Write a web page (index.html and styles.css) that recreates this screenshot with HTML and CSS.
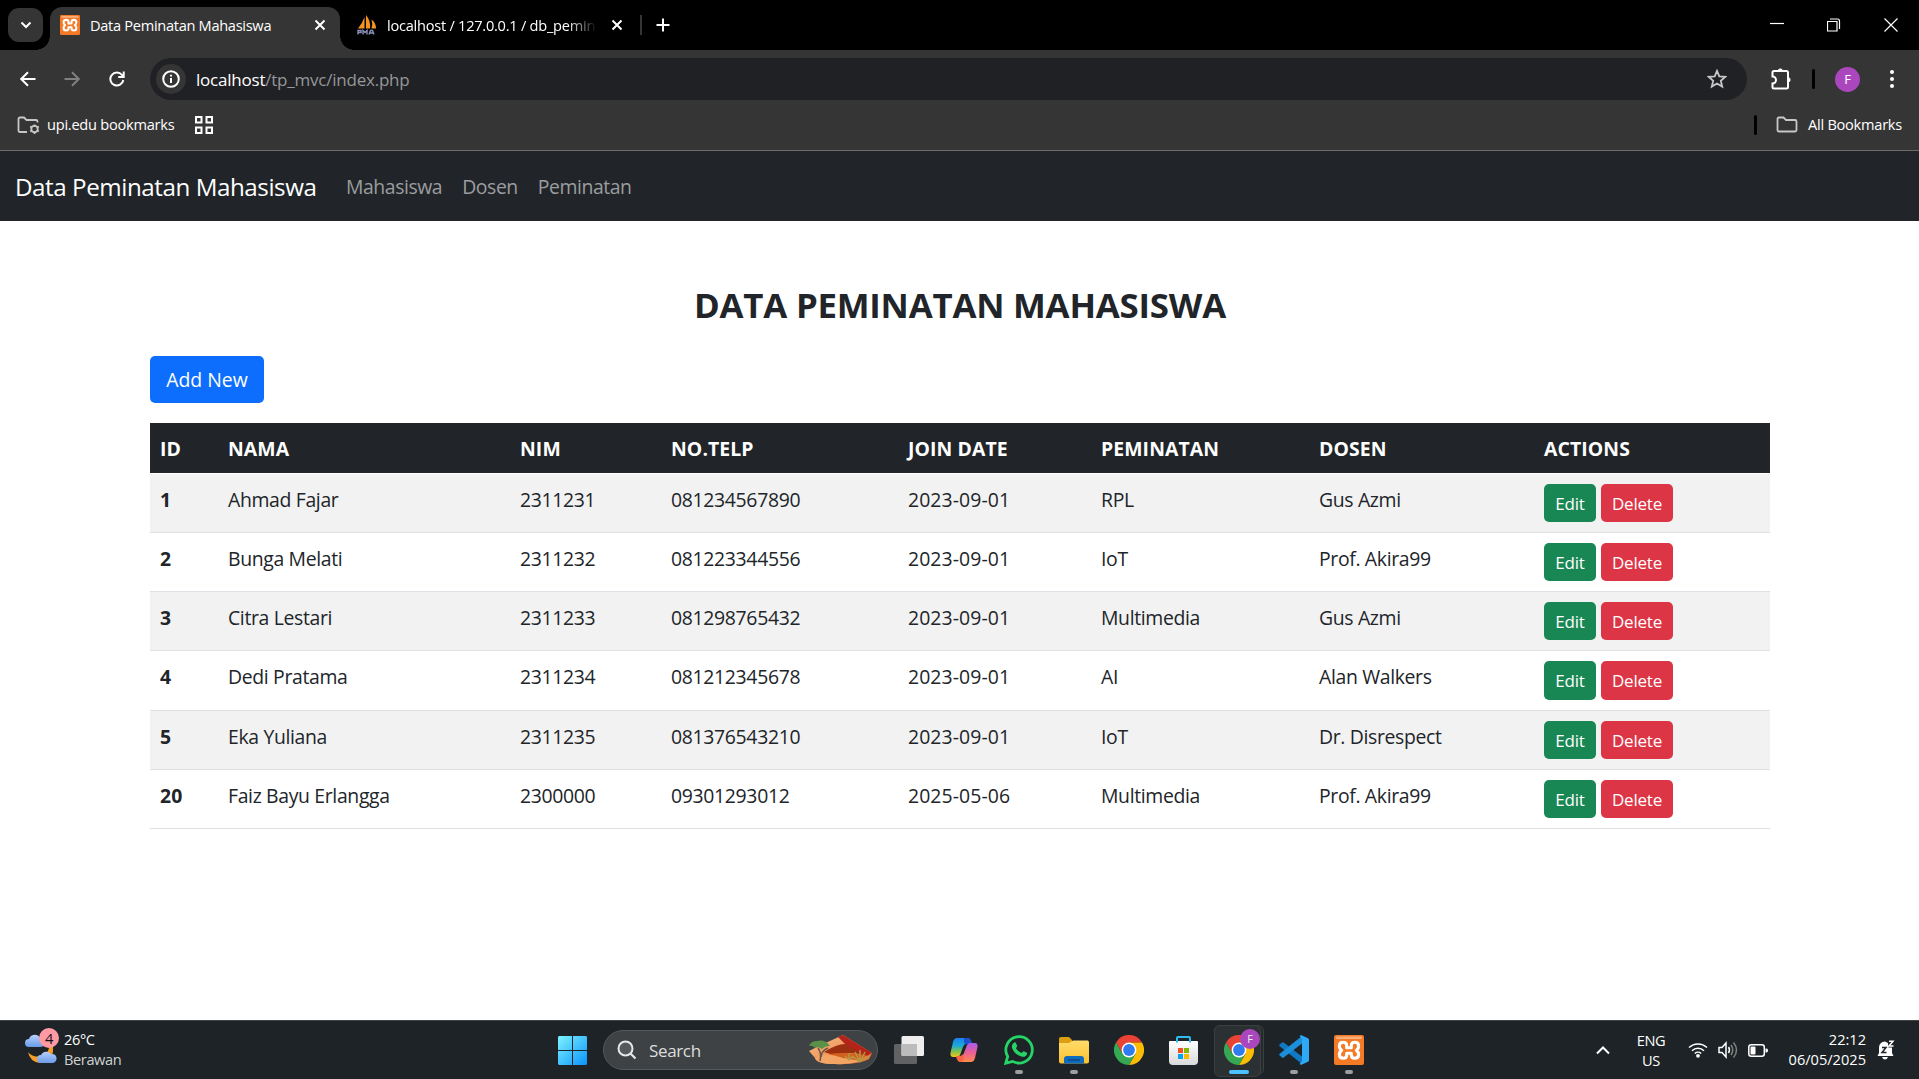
FILE: index.html
```html
<!DOCTYPE html>
<html lang="id">
<head>
<meta charset="utf-8">
<title>Data Peminatan Mahasiswa</title>
<link rel="stylesheet" href="styles.css">
</head>
<body>
<svg class="defs" width="0" height="0" aria-hidden="true">
  <defs>
    <linearGradient id="win" x1="0" y1="0" x2="1" y2="1"><stop offset="0" stop-color="#7df3ff"/><stop offset="1" stop-color="#0a93fb"/></linearGradient>
    <linearGradient id="fold" x1="0" y1="0" x2="0" y2="1"><stop offset="0" stop-color="#ffdc6b"/><stop offset="1" stop-color="#fcc02f"/></linearGradient>
    <linearGradient id="cop1" x1="0" y1="0" x2="0" y2="1"><stop offset="0" stop-color="#1d7ff0"/><stop offset=".4" stop-color="#19a9d8"/><stop offset=".7" stop-color="#7fc250"/><stop offset="1" stop-color="#f3c61c"/></linearGradient>
    <linearGradient id="cop2" x1="0" y1="0" x2="0" y2="1"><stop offset="0" stop-color="#a65cf0"/><stop offset=".5" stop-color="#ea5f96"/><stop offset="1" stop-color="#ff8a4c"/></linearGradient>
    <linearGradient id="dune" x1="0" y1="0" x2="1" y2="1"><stop offset="0" stop-color="#fbc08a"/><stop offset="1" stop-color="#e2702f"/></linearGradient>
    <linearGradient id="store" x1="0" y1="0" x2="0" y2="1"><stop offset="0" stop-color="#fff"/><stop offset="1" stop-color="#d9d9d9"/></linearGradient>
    <linearGradient id="cloud" x1="0" y1="0" x2="0" y2="1"><stop offset="0" stop-color="#b4d0fb"/><stop offset="1" stop-color="#6b9be9"/></linearGradient>
    <symbol id="xampp" viewBox="0 0 30 30">
      <rect width="30" height="30" rx="2" fill="#f47a26"/><rect x="2" y="1.5" width="26" height="2.5" rx="1.2" fill="#f9ae7c"/>
      <path d="M15 12.800H17.300V10.500Q17.300 7.300 20.800 7.300 24.600 7.300 24.600 11 24.600 14 22.300 15.300 24.600 16.600 24.600 19.600 24.600 23.300 20.800 23.300 17.300 23.300 17.300 20V18.300H12.700V20Q12.700 23.300 9.200 23.300 5.400 23.300 5.400 19.600 5.400 16.600 7.700 15.300 5.400 14 5.400 11 5.400 7.300 9.200 7.300 12.700 7.300 12.700 10.500V12.800Z" fill="none" stroke="#fff" stroke-width="3.100" stroke-linejoin="round"/>
    </symbol>
    <symbol id="chrome" viewBox="0 0 30 30">
      <path d="M2 7.500A15 15 0 0 1 28 7.500H15L8.500 18.800Z" fill="#ea4335"/>
      <path d="M28 7.500A15 15 0 0 1 15 30L21.500 18.700 15 7.500Z" fill="#fbbc05"/>
      <path d="M2 7.500 8.500 18.800Q15 25 21.500 18.700L15 30A15 15 0 0 1 2 7.500Z" fill="#34a853"/>
      <circle cx="15" cy="15" r="7.400" fill="#fff"/><circle cx="15" cy="15" r="5.900" fill="#2f7cf0"/>
    </symbol>
  </defs>
</svg>

<header class="chrome">
  <div class="tabstrip">
    <button class="tab-search"><svg width="12" height="8" viewBox="0 0 12 8"><path d="m1.500 1.500 4.500 4.500 4.500-4.500" class="ln w2"/></svg></button>
    <div class="tab active">
      <svg class="fav" viewBox="0 0 30 30"><use href="#xampp"/></svg>
      <span class="tab-title">Data Peminatan Mahasiswa</span>
      <svg class="x" width="12" height="12" viewBox="0 0 12 12"><path d="m1.500 1.500 9 9m0-9-9 9" class="ln w2"/></svg>
    </div>
    <div class="tab idle">
      <svg class="fav" viewBox="0 0 20 20"><path d="M7.500 2v11.500H1Q5.500 8 7.500 2ZM9 0q5 6 4 13.500H9ZM14.500 4.500q4.500 3 4.500 9h-4.500Q16 9 14.500 4.500Z" fill="#f5951f"/><path d="M1 19.500v-4h3v2H1m5 2v-4l2 2 2-2v4m2 0 1.500-4h2l1.500 4m-4-1.500h3" fill="none" stroke="#8a8fb8" stroke-width="1.400"/></svg>
      <span class="tab-title fade">localhost / 127.0.0.1 / db_pemin</span>
      <svg class="x" width="12" height="12" viewBox="0 0 12 12"><path d="m1.500 1.500 9 9m0-9-9 9" class="ln w2"/></svg>
    </div>
    <i class="tab-sep"></i>
    <svg class="plus" width="14" height="14" viewBox="0 0 14 14"><path d="M7 .5v13M.5 7h13" class="ln w2"/></svg>
    <div class="win">
      <svg width="14" height="14" viewBox="0 0 14 14"><path d="M0 5.500h14" class="ln w1"/></svg>
      <svg width="14" height="14" viewBox="0 0 14 14"><path d="M.5 3.500h9.500v9.500H.5zM3 1h7.500q2 0 2 2v8" class="ln w1"/></svg>
      <svg width="14" height="14" viewBox="0 0 14 14"><path d="m.5.5 13 13m0-13-13 13" class="ln w1"/></svg>
    </div>
  </div>
  <div class="toolbar">
    <svg class="back" width="16" height="16" viewBox="0 0 16 16"><path d="M15.500 8H1.500M8 1.200 1.200 8 8 14.800" class="ln w2"/></svg>
    <svg class="fwd" width="16" height="16" viewBox="0 0 16 16"><path d="M.5 8h14M8 1.200 14.800 8 8 14.800" class="ln w2 dim"/></svg>
    <svg class="reload" width="16" height="16" viewBox="0 0 16 16"><path d="M14.300 9A6.500 6.500 0 1 1 13 4L14.500 5.500M14.700.5V6H9.200" class="ln w2"/></svg>
    <div class="omnibox">
      <span class="info"><svg width="18" height="18" viewBox="0 0 18 18"><circle cx="9" cy="9" r="7.800" class="ln w2"/><path d="M9 8v5M9 4.800v1.800" class="ln w2"/></svg></span>
      <span class="url">localhost<span class="path">/tp_mvc/index.php</span></span>
      <svg class="star" width="20" height="20" viewBox="0 0 20 20"><path d="m10 1.800 2.300 5.500 6 .5-4.500 3.900 1.400 5.900L10 14.500l-5.200 3.100 1.400-5.900L1.700 7.800l6-.5Z" class="ln soft"/></svg>
    </div>
    <svg class="puzzle" width="24" height="24" viewBox="0 0 24 24"><path d="M3.500 5.500q0-1.500 1.500-1.500H17.500q1.500 0 1.500 1.500V20q0 1.500-1.500 1.500H5q-1.500 0-1.500-1.500V16.500a3.500 3.500 0 0 0 0-7Z" class="ln w2"/><path d="M8.800 4a2.500 2.500 0 0 1 5 0ZM19 10.200a2.500 2.500 0 0 1 0 5Z" fill="#fff"/></svg>
    <i class="bar b1"></i>
    <span class="avatar">F</span>
    <svg class="dots" width="6" height="20" viewBox="0 0 6 20"><circle cx="3" cy="3" r="2" fill="#fff"/><circle cx="3" cy="10" r="2" fill="#fff"/><circle cx="3" cy="17" r="2" fill="#fff"/></svg>
  </div>
  <div class="bookmarks">
    <svg width="24" height="20" viewBox="0 0 24 20"><path d="M11 17H4q-1.500 0-1.500-1.500V4Q2.500 2.500 4 2.500h4L10.500 5h9.500q1.500 0 1.500 1.500V7.500" class="ln soft"/><circle cx="18.500" cy="14" r="3.200" class="ln soft"/><path d="M18.500 9.500v2m0 5.500v2m-4.300-7.500 1.700 1m5.200 3 1.700 1m0-5-1.700 1m-5.200 3-1.700 1" class="ln soft"/></svg>
    <span class="bm">upi.edu bookmarks</span>
    <svg class="grid" width="18" height="18" viewBox="0 0 18 18"><path d="M1 1h5.500v5.500H1zM11.500 1H17v5.500h-5.500zM1 11.500h5.500V17H1zM11.500 11.500H17V17h-5.500z" class="ln w2"/></svg>
    <i class="bar b2"></i>
    <svg width="22" height="17" viewBox="0 0 22 17"><path d="M1.500 3q0-1.500 1.500-1.500h4.500L10 4h9q1.500 0 1.500 1.500V14q0 1.500-1.500 1.500H3Q1.500 15.500 1.500 14Z" class="ln soft"/></svg>
    <span class="all">All Bookmarks</span>
  </div>
</header>

<nav class="navbar">
  <a class="brand">Data Peminatan Mahasiswa</a>
  <a class="link">Mahasiswa</a><a class="link">Dosen</a><a class="link">Peminatan</a>
</nav>

<main class="container">
  <h3 class="title">DATA PEMINATAN MAHASISWA</h3>
  <a class="btn add">Add New</a>
  <table class="table">
    <colgroup><col class="c1"><col class="c2"><col class="c3"><col class="c4"><col class="c5"><col class="c6"><col class="c7"><col class="c8"></colgroup>
    <thead><tr><th>ID</th><th>NAMA</th><th>NIM</th><th>NO.TELP</th><th>JOIN DATE</th><th>PEMINATAN</th><th>DOSEN</th><th>ACTIONS</th></tr></thead>
    <tbody>
      <tr><th>1</th><td>Ahmad Fajar</td><td class="num">2311231</td><td class="num">081234567890</td><td class="date">2023-09-01</td><td>RPL</td><td>Gus Azmi</td><td class="act"><a class="btn sm edit">Edit</a><a class="btn sm del">Delete</a></td></tr>
      <tr><th>2</th><td>Bunga Melati</td><td class="num">2311232</td><td class="num">081223344556</td><td class="date">2023-09-01</td><td>IoT</td><td>Prof. Akira99</td><td class="act"><a class="btn sm edit">Edit</a><a class="btn sm del">Delete</a></td></tr>
      <tr><th>3</th><td>Citra Lestari</td><td class="num">2311233</td><td class="num">081298765432</td><td class="date">2023-09-01</td><td>Multimedia</td><td>Gus Azmi</td><td class="act"><a class="btn sm edit">Edit</a><a class="btn sm del">Delete</a></td></tr>
      <tr class="tall"><th>4</th><td>Dedi Pratama</td><td class="num">2311234</td><td class="num">081212345678</td><td class="date">2023-09-01</td><td>AI</td><td>Alan Walkers</td><td class="act"><a class="btn sm edit">Edit</a><a class="btn sm del">Delete</a></td></tr>
      <tr><th>5</th><td>Eka Yuliana</td><td class="num">2311235</td><td class="num">081376543210</td><td class="date">2023-09-01</td><td>IoT</td><td>Dr. Disrespect</td><td class="act"><a class="btn sm edit">Edit</a><a class="btn sm del">Delete</a></td></tr>
      <tr><th>20</th><td>Faiz Bayu Erlangga</td><td class="num">2300000</td><td class="num">09301293012</td><td class="date">2025-05-06</td><td>Multimedia</td><td>Prof. Akira99</td><td class="act"><a class="btn sm edit">Edit</a><a class="btn sm del">Delete</a></td></tr>
    </tbody>
  </table>
</main>

<footer class="taskbar">
  <div class="weather">
    <div class="wicon">
      <svg width="36" height="36" viewBox="0 0 36 36"><path d="M23 8a12 12 0 0 1-19 15q2 10 12 11Q30 33 29 18 27 11 23 8Z" fill="#f59f26"/><path d="M5 18a4 4 0 0 1 0-8 6 6 0 0 1 11-1 4.500 4.500 0 0 1 1 9Z" fill="url(#cloud)"/><path d="M17 34a4 4 0 0 1 0-8 6 6 0 0 1 10-1 4.500 4.500 0 0 1 2 9Z" fill="url(#cloud)"/></svg>
      <span class="badge">4</span>
    </div>
    <div class="wtext"><span>26°C</span><span class="sub">Berawan</span></div>
  </div>
  <div class="apps">
    <svg class="start" width="29" height="29" viewBox="0 0 29 29"><path d="M1 0h13v14H0V1zM15 0h13l1 1v13H15zM0 15h14v14H1l-1-1zM15 15h14v13l-1 1H15z" fill="url(#win)"/></svg>
    <div class="search">
      <svg width="20" height="20" viewBox="0 0 20 20"><circle cx="8.500" cy="8.500" r="7" fill="#55595b" stroke="#e6e7e7" stroke-width="2"/><path d="m13.500 13.500 5 5" stroke="#e6e7e7" stroke-width="2.200"/></svg>
      <span class="stext">Search</span>
      <svg width="64" height="30" viewBox="0 0 64 30"><path d="M0 16 10 11 34 0 63 18 60 24Q50 30 26 29 8 29 6 23Z" fill="url(#dune)"/><path d="M29 2 34 0 63 18 58 21 40 13Z" fill="#b3231a"/><path d="M15 17Q28 9 36 9L57 21Q44 16 34 19 24 21 15 17Z" fill="#9c2f10"/><path d="M20 19Q38 16 57 21L50 25Q34 25 20 19Z" fill="#d2601f"/><path d="M6 23q12-6 28 0l17 3q-12 4-25 3Q8 29 6 23Z" fill="#f3a566"/><path d="M9 13q4 5 2 13M19 13q-7 3-7 9" stroke="#6d5648" stroke-width="1.600" fill="none"/><path d="M0 11q2-5 8-5 8-2 13 5-5 0-8 3-4-3-7-1-3-3-6-2Z" fill="#5b9146"/><path d="M51 27 43 21m8 6-5-10m5 10V15m0 12 5-10m-5 10 8-6M40 25l-4-4m4 4v-7m0 7 4-4" stroke="#b99642" stroke-width="1.500"/></svg>
    </div>
    <svg class="slot" width="30" height="30" viewBox="0 0 30 30"><rect x="0" y="9" width="23" height="20" rx="1.500" fill="#606263"/><rect x="7.500" y="1" width="22.500" height="20" rx="1.500" fill="#eee"/><path d="M7.500 9H23v12H9q-1.500 0-1.500-1.500Z" fill="#bcbcbc"/></svg>
    <svg class="slot" width="30" height="30" viewBox="0 0 30 30"><path d="M8 3h11q2 0 3 3l1 3h-6q-2 0-3 3l-3 8q-1 2-3 2H4q-3 0-2.500-4L4 7q1-4 4-4Z" fill="url(#cop1)"/><path d="M15 3h4q2 0 3 3l1 3h-5q-3 0-3-2Z" fill="#1c50cf"/><path d="M22 27H11q-2 0-3-3l-1-3h4q3 0 4-3l3-8q1-2 3-2h5q3 0 2.500 4L26 23q-1 4-4 4Z" fill="url(#cop2)"/><path d="M7 21h4q2 0 3-2l1 5q-1 3-4 3-2 0-3-3Z" fill="#f66442"/></svg>
    <div class="slot run"><svg width="30" height="30" viewBox="0 0 30 30"><path d="M1.800 28.200 3.700 21.500A13.200 13.200 0 1 1 8.700 26.400Z" fill="#1d2326" stroke="#25d366" stroke-width="2.800"/><path d="M9.500 8q1-1 2.200-.5l1.500 3.500q0 .8-1.300 2 2 3.800 5.700 5 1.500-2 2.200-1.800l3.200 1.500q.5 2-1.200 3.200-2 1.300-4.500.6-7-2-9.300-8.700-.6-3 1.500-4.800Z" fill="#25d366"/></svg></div>
    <div class="slot run"><svg width="30" height="30" viewBox="0 0 30 30"><path d="M0 4q0-2 2-2h8l3 3v5H0Z" fill="#dc9f12"/><path d="M0 8h10l4-2.500h15L30 7v19.500q0 2-2 2H2q-2 0-2-2Z" fill="url(#fold)"/><path d="M5 28.500V24q0-3 3-3h14q3 0 3 3v4.500Z" fill="#0f6cbd"/><path d="M9 25h12" stroke="#084a86" stroke-width="1.500"/></svg></div>
    <svg class="slot" width="30" height="30"><use href="#chrome"/></svg>
    <svg class="slot" width="30" height="30" viewBox="0 0 30 30"><path d="M0 7q0-1 1-1h27q1 0 1 1v19q0 4-4 4H4q-4 0-4-4Z" fill="url(#store)"/><path d="M8 7.500V3q0-1 1-1h11q1 0 1 1v4.500" fill="none" stroke="#2fbdf0" stroke-width="2"/><path d="M9 13h5v5H9z" fill="#f25022"/><path d="M15 13h5v5h-5z" fill="#7fba00"/><path d="M9 19h5v5H9z" fill="#00a4ef"/><path d="M15 19h5v5h-5z" fill="#ffb900"/></svg>
    <div class="slot tile"><i class="stack"></i><svg width="30" height="30"><use href="#chrome"/></svg><span class="pbadge">F</span></div>
    <div class="slot run"><svg width="30" height="30" viewBox="0 0 30 30"><path d="M.7 11.200q-1-1 0-1.700l2.300-2q.8-.6 1.700 0L23 21.500V29Z" fill="#1079c4"/><path d="M.7 18.800q-1 1 0 1.700l2.300 2q.8.600 1.700 0L23 8.500V1Z" fill="#1b8fdb"/><path d="M22.500.2 29 3.200q1 .5 1 1.600v20.400q0 1.100-1 1.600l-6.500 3q-1 .2-2-.8L23 26V4L20.500 1q1-1 2-.8Z" fill="#2fa8f5"/></svg></div>
    <div class="slot run"><svg width="30" height="30"><use href="#xampp"/></svg></div>
  </div>
  <div class="tray">
    <svg class="chev" width="14" height="9" viewBox="0 0 14 9"><path d="m1 7.500 6-6 6 6" class="ln w2"/></svg>
    <div class="lang"><span>ENG</span><span>US</span></div>
    <svg class="wifi" width="20" height="16" viewBox="0 0 20 16"><path d="M1 5.500a13 13 0 0 1 18 0M4 8.700a8.700 8.700 0 0 1 12 0M6.800 11.500a4.700 4.700 0 0 1 6.400 0" class="ln w15"/><circle cx="10" cy="13.800" r="1.900" fill="#fff"/></svg>
    <svg class="spk" width="20" height="18" viewBox="0 0 20 18"><path d="M1 6.500h3l4-4.500v14l-4-4.500H1ZM10.500 6q2 3 0 6" class="ln w15"/><path d="M13 4q3.500 5 0 10M15.500 1.500q6 7.500 0 15" class="ln w15 dim"/></svg>
    <svg class="bat" width="20" height="13" viewBox="0 0 20 13"><rect x=".8" y=".8" width="15.500" height="11.400" rx="2.500" class="ln w15"/><rect x="2.500" y="2.500" width="5" height="8" rx="1" fill="#fff"/><path d="M17.500 4.500h1q1.500 0 1.500 2t-1.500 2h-1Z" fill="#fff"/></svg>
    <div class="clock"><span>22:12</span><span>06/05/2025</span></div>
    <svg class="bell" width="18" height="20" viewBox="0 0 18 20"><path d="M2 8q0-6 6-6.500L15 5v8l1.500 3H.5L2 13Z" fill="#fff"/><path d="M5 17h6q-1 2.500-3 2.500t-3-2.500Z" fill="#fff"/><path d="M5 7.500h4l-4 5h4.500" stroke="#1d2326" stroke-width="1.500" fill="none"/><path d="M10.500 0h7v7.500h-6Z" fill="#1d2326"/><path d="M12 1.200h4L12 6h4.500" class="ln w15"/></svg>
  </div>
</footer>
</body>
</html>
```
FILE: styles.css
```css
* { box-sizing: border-box; }
body { margin: 0; width: 1919px; height: 1079px; overflow: hidden; display: flex; flex-direction: column; background: #fff; color: #212529; font-family: "Open Sans", "Noto Sans", sans-serif; font-size: 19.4px; line-height: 30px; letter-spacing: -.34px; }
svg { display: block; flex: none; }
span, a { white-space: nowrap; }
.defs { position: absolute; }
.ln { fill: none; stroke: #fff; }
.w1 { stroke-width: 1.2; }
.w15 { stroke-width: 1.5; }
.w2 { stroke-width: 2; }
.soft { stroke: #c7c7c7; stroke-width: 1.8; }
.dim { stroke: #808080; }

/* browser window */
.chrome { height: 151px; background: #353535; border-bottom: 1px solid #6c6c6c; color: #fff; font-size: 14.6px; letter-spacing: -.3px; line-height: 20px; }
.tabstrip { height: 50px; background: #000; display: flex; align-items: center; }
.tab-search { width: 35px; height: 34px; margin: 0 7px 0 8px; padding: 0; border: 0; border-radius: 11px; background: #353535; display: flex; align-items: center; justify-content: center; }
.tab { display: flex; align-items: center; height: 43px; align-self: flex-end; }
.active { position: relative; width: 290px; padding: 0 14px 8px 10px; border-radius: 12px 12px 0 0; background: #353535; }
.active::before, .active::after { content: ""; position: absolute; bottom: 0; width: 14px; height: 14px; }
.active::before { left: -14px; background: radial-gradient(circle at 0 0, transparent 13.5px, #353535 14px); }
.active::after { right: -14px; background: radial-gradient(circle at 100% 0, transparent 13.5px, #353535 14px); }
.fav { width: 20px; height: 20px; margin-right: 10px; }
.active .x { margin-left: auto; }
.idle { padding: 0 0 8px 17px; }
.fade { width: 212px; margin-right: 12px; letter-spacing: -.25px; -webkit-mask-image: linear-gradient(90deg, #000 180px, transparent 210px); mask-image: linear-gradient(90deg, #000 180px, transparent 210px); }
.tab-sep { width: 2px; height: 20px; margin: 0 14px 0 17px; background: #353535; }
.win { display: flex; gap: 43px; margin: 0 21px 0 auto; }

.toolbar { height: 58px; display: flex; align-items: center; }
.back { margin-left: 20px; }
.fwd { margin-left: 28px; }
.reload { margin-left: 29px; }
.omnibox { width: 1597px; height: 42px; margin-left: 25px; padding: 0 20px 0 6px; border-radius: 21px; background: #202124; display: flex; align-items: center; font-size: 17px; letter-spacing: -.22px; }
.info { width: 30px; height: 30px; border-radius: 50%; background: #353535; display: flex; align-items: center; justify-content: center; }
.url { margin-left: 10px; padding-top: 1px; }
.path { color: #969799; }
.star { margin-left: auto; }
.puzzle { margin-left: 22px; }
.bar { width: 3px; border-radius: 2px; background: #000; }
.b1 { height: 20px; margin: 0 20px 0 19px; }
.avatar { width: 25px; height: 25px; border-radius: 50%; background: #ab47bc; font-size: 13px; line-height: 25px; text-align: center; }
.dots { margin-left: 29px; }

.bookmarks { height: 33px; display: flex; align-items: center; padding: 0 17px 0 16px; }
.bm { margin-left: 7px; padding-bottom: 1px; letter-spacing: -.25px; }
.grid { margin-left: 21px; }
.b2 { height: 20px; margin: 0 19px 0 auto; }
.all { margin-left: 10px; padding-bottom: 1px; letter-spacing: -.25px; }

/* page */
.navbar { height: 70px; padding: 2px 0 0 15px; display: flex; align-items: center; background: #212529; }
.brand { width: 331px; font-size: 24.2px; letter-spacing: -.45px; color: #fff; }
.link { margin-right: 20px; color: #9b9d9f; letter-spacing: -.43px; }
.container { flex: 1; padding: 63px 149px 0 150px; }
.title { margin: 0 0 30px; font-size: 34.8px; font-weight: 700; line-height: 42px; letter-spacing: -.23px; text-align: center; }
.btn { display: inline-block; color: #fff; text-align: center; border-radius: 5px; }
.add { display: block; width: 114px; height: 47px; margin-bottom: 20px; line-height: 47px; background: #0d6efd; letter-spacing: 0; }
.table { width: 1620px; table-layout: fixed; border-collapse: separate; border-spacing: 0; }
.c1 { width: 68px; }
.c2 { width: 292px; }
.c3 { width: 151px; }
.c4 { width: 237px; }
.c5 { width: 193px; }
.c6 { width: 218px; }
.c7 { width: 225px; }
.c8 { width: 236px; }
th, td { height: 59px; padding: 11px 10px 0; vertical-align: top; text-align: left; border-bottom: 1px solid #dee2e6; }
thead th { height: 51px; background: #212529; color: #fff; border-color: #fff; letter-spacing: .1px; }
tbody th { letter-spacing: .2px; }
tbody tr:nth-child(odd) > * { background: #f2f2f2; }
.tall > * { height: 60px; }
.num { letter-spacing: -.32px; }
.date { letter-spacing: .1px; }
.act { padding-top: 10px; font-size: 0; }
.sm { height: 38px; line-height: 39px; font-size: 17px; letter-spacing: -.18px; }
.tall .sm { height: 39px; }
.edit { width: 52px; margin-right: 5px; background: #198754; }
.del { width: 72px; background: #dc3545; }

/* taskbar */
.taskbar { height: 59px; display: flex; background: #1d2326; border-top: 1px solid #3d4244; color: #fff; font-size: 14.6px; line-height: 20px; letter-spacing: -.4px; }
.weather { width: 558px; padding: 8px 0 0 24px; display: flex; }
.wicon { position: relative; width: 40px; height: 36px; }
.badge { position: absolute; left: 15px; top: -1px; width: 20px; height: 20px; border-radius: 50%; background: #ff99a4; color: #111; text-align: center; }
.wtext, .lang, .clock { display: flex; flex-direction: column; }
.sub { color: #d0d2d2; }
.apps { display: flex; width: 1020px; }
.start { margin: 15px 16px 0 0; }
.search { width: 275px; height: 40px; margin: 9px 16px 0 0; padding: 0 4px 0 13px; border: 1px solid #54585a; border-radius: 20px; background: #3e4244; display: flex; align-items: center; font-size: 17px; letter-spacing: -.35px; color: #dcdddd; }
.stext { margin: 0 auto 0 12px; padding-top: 1px; }
.slot { position: relative; width: 30px; height: 30px; margin: 14px 25px 0 0; }
.run::after { content: ""; position: absolute; left: 11px; bottom: -9px; width: 8px; height: 4px; border-radius: 2px; background: #9c9e9f; }
.tile::before, .stack { content: ""; position: absolute; left: -10px; top: -10px; width: 45px; height: 50px; border: 1px solid #3a3f41; border-radius: 6px; background: #2b3033; }
.stack { width: 50px; background: #24292c; }
.tile::before { z-index: 1; }
.tile::after { content: ""; position: absolute; z-index: 2; left: 5px; bottom: -9px; width: 20px; height: 4px; border-radius: 2px; background: #4cc2ff; }
.tile svg { position: relative; z-index: 2; }
.pbadge { position: absolute; z-index: 3; left: 16px; top: -6px; width: 20px; height: 20px; border-radius: 50%; background: #ab47bc; color: #eee; font-size: 11px; text-align: center; }
.tray { display: flex; align-items: center; flex: 1; padding-left: 18px; }
.lang { align-items: center; width: 28px; margin-left: 27px; margin-right: 23px; padding-bottom: 1px; }
.spk { margin-left: 10px; }
.bat { margin-left: 10px; }
.clock { width: 78px; margin: 0 11px 0 20px; padding-bottom: 2px; align-items: flex-end; letter-spacing: 0; }
.bell { margin-top: 0; }
```
